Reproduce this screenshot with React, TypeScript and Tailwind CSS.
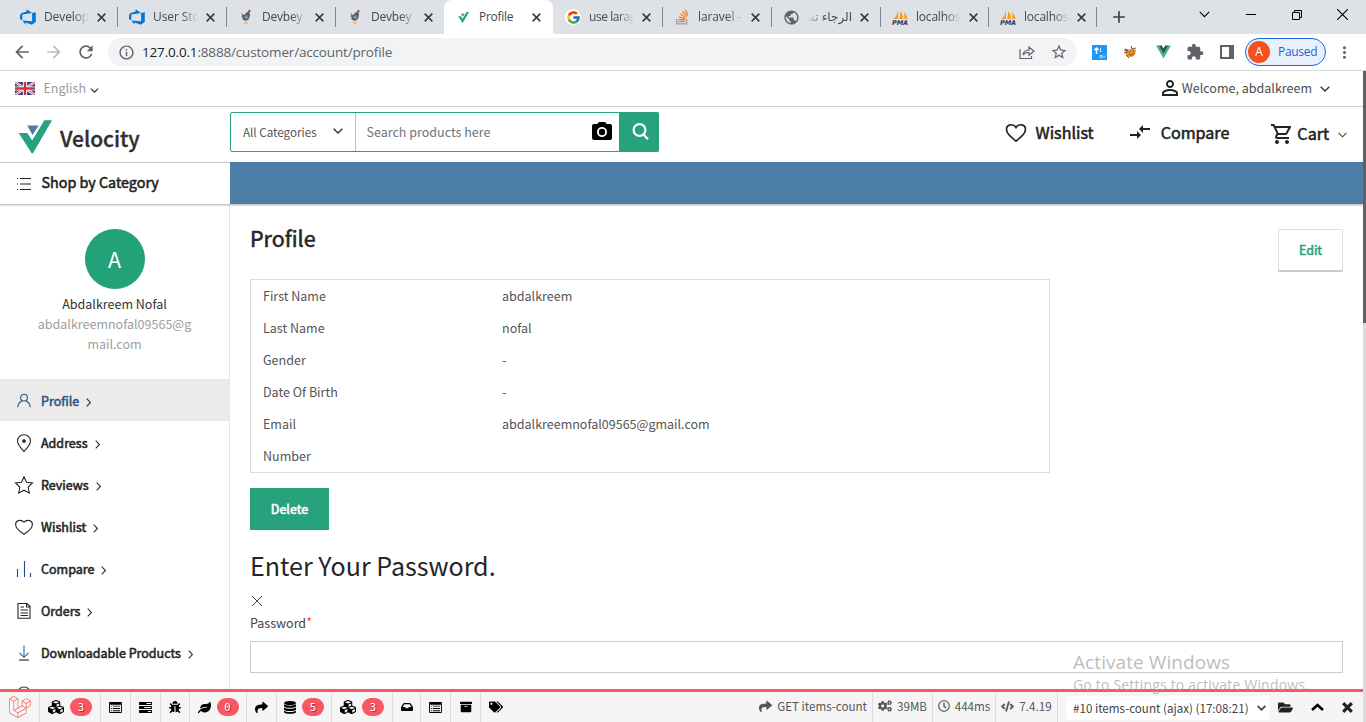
import React from "react";
import {
  FaArchive, FaBug, FaCode, FaCogs, FaCubes, FaFolderOpen,
  FaInbox, FaLaravel, FaLeaf, FaRegClock, FaShare, FaTags,
} from "react-icons/fa";
import { FcGoogle } from "react-icons/fc";
import {
  MdArrowBack, MdArrowForward, MdCompareArrows, MdExtension, MdInfoOutline, MdMoreVert,
  MdOutlineShoppingCart, MdPersonOutline, MdPhotoCamera, MdPublic, MdRefresh, MdStarBorder, MdAdd,
} from "react-icons/md";

const site = "font-['Noto_Sans_CJK_SC',sans-serif]";
const chrome = "font-['Open_Sans','DejaVu_Sans',sans-serif]";
const heavy = "[-webkit-text-stroke:0.55px_currentColor]";

function Chevron({ className, w = 1.2 }: { className: string; w?: number }) {
  return (
    <svg viewBox="0 0 10 6" className={className} fill="none" stroke="currentColor" strokeWidth={w}>
      <path d="M.7.7 5 5 9.3.7" />
    </svg>
  );
}

function Azure() {
  return (
    <svg viewBox="0 0 16 16" className="size-4">
      <path fill="#0078d7" d="M15.800 3.300v9.400L11.900 15.800 5.600 13.600v2.100L2.400 11.400l9.700.9V4zM12.100 4 6.600.3v2.300L1.500 4.100 0 6v4.200l2.300 1V5.400z" />
    </svg>
  );
}
function Chicken() {
  return (
    <svg viewBox="0 0 16 16" className="size-4">
      <path fill="#56616c" d="m3 4 3 2 3-3h2.500L12 6l-1 4-3 2-2.500-1L4 9.500l1-1L3 7l1.500-.5z" />
      <path fill="#8c969e" d="m6 8 3-2 1 3-2 1z" />
      <path fill="#e03131" d="M10 1h2.500v2h-2z" />
      <path fill="#edbd65" d="M6 13h4l-1 2.500H7z" />
    </svg>
  );
}
function StackIcon() {
  return (
    <svg viewBox="0 0 16 16" className="size-4" fill="none" strokeWidth="1.300">
      <path stroke="#9aa0a6" d="M2.700 10v4.800h10V10" />
      <path stroke="#f48024" d="M4.300 12.600h6.500M4.400 10.300l6.500.7M5 7.800l6.300 2M6.400 5l5.600 3.500M8.500 2.500l4.600 4.700M11.300.700l2.700 5.500" />
    </svg>
  );
}
function Pma() {
  return (
    <svg viewBox="0 0 17 16" className="h-4 w-[17px]">
      <path fill="#f89c1c" d="M6 1v9H1.500C4 8 5.500 5 6 1zm2 1c2 2 3 5 3 8H7.200C8 7 8.300 4 8 2zm4 1c2 2 3 4 3.500 7h-3.300c.3-2 .3-5-.2-7z" />
      <text x="0" y="15.500" fontSize="6.500" fontWeight="900" fontStyle="italic" fill="#333366" fontFamily="DejaVu Sans" textLength="16">PMA</text>
    </svg>
  );
}
function VLogo({ className }: { className: string }) {
  return (
    <svg viewBox="0 0 34 34" className={className}>
      <path fill="#26a37c" d="M.7 13h8.500l5 7.500L26.300.300H34L15 33.300H13.700z" />
      <path fill="#4d7ea8" d="M9.200 5.500h11.500L14.600 15z" />
    </svg>
  );
}

type Tab = { title: string; icon: React.ReactNode; active?: boolean; rtl?: boolean; w: string; sep?: boolean; tr: string };
const tabs: Tab[] = [
  { title: "Develop", icon: <Azure />, w: "w-[109px]", sep: true, tr: "tracking-[-0.1px]" },
  { title: "User Sto", icon: <Azure />, w: "w-[109px]", sep: true, tr: "tracking-[-0.1px]" },
  { title: "Devbey -", icon: <Chicken />, w: "w-[109px]", sep: true, tr: "tracking-[-0.2px]" },
  { title: "Devbey -", icon: <Chicken />, w: "w-[109px]", tr: "tracking-[-0.2px]" },
  { title: "Profile", icon: <VLogo className="ml-[3px] size-[11px]" />, active: true, w: "w-[109px]", tr: "tracking-[-0.3px]" },
  { title: "use larag", icon: <span className="flex size-4 items-center justify-center rounded-full bg-white"><FcGoogle size={15} /></span>, w: "w-[109px]", sep: true, tr: "tracking-[-0.42px]" },
  { title: "laravel -", icon: <StackIcon />, w: "w-[109px]", sep: true, tr: "tracking-[-0.1px]" },
  { title: "الرجاء تسـ", icon: <MdPublic size={17} color="#5f6368" />, rtl: true, w: "w-[109px]", sep: true, tr: "tracking-normal" },
  { title: "localhos", icon: <Pma />, w: "w-[108px]", sep: true, tr: "tracking-[-0.2px]" },
  { title: "localhos", icon: <Pma />, w: "w-[108px]", sep: true, tr: "tracking-[-0.2px]" },
];

function Browser() {
  return (
    <div className={`${chrome} shrink-0`}>
      <div className="flex h-[34px] items-stretch bg-[#dee1e6] pl-[9px] text-[#45494d]">
        {tabs.map((t, i) => (
          <div key={i} className={`${t.w} relative flex items-center pl-[11px] ${t.active ? "-ml-px mr-px rounded-t-lg bg-white" : ""}`}>
            <span className="flex w-[24px] shrink-0 items-center">{t.icon}</span>
            <span dir={t.rtl ? "rtl" : "ltr"} className={`${t.tr} w-[45px] whitespace-nowrap text-[12px] leading-5 ${t.active ? "" : t.rtl ? "[mask-image:linear-gradient(to_left,black_60%,transparent)]" : "[mask-image:linear-gradient(to_right,black_65%,transparent)]"}`}>{t.title}</span>
            <svg viewBox="0 0 9 9" className="ml-[8px] size-[9px] shrink-0" stroke="#3c4043" strokeWidth="1.700"><path d="m.7.7 7.600 7.600M8.300.7.7 8.300" /></svg>
            {t.sep && <span className="absolute right-0 top-[7px] h-5 w-px bg-[#84888d]" />}
          </div>
        ))}
        <div className="flex w-[44px] items-center justify-center"><MdAdd size={20} color="#3c4043" /></div>
        <div className="ml-auto flex items-center gap-[35px] pr-[18px] pb-[5px] text-black">
          <Chevron className="h-[7px] w-[11px] -translate-x-[2px]" w={1} />
          <span className="h-px w-[10px] -translate-x-px bg-black" />
          <svg viewBox="0 0 10 10" className="size-[10px]" fill="none" stroke="currentColor"><path d="M.5 2.500h7v7h-7zM2.500 2.500v-2h7v7h-2" /></svg>
          <svg viewBox="0 0 10 10" className="size-[11px]" stroke="currentColor"><path d="m0 0 10 10M10 0 0 10" /></svg>
        </div>
      </div>
      <div className="flex h-[37px] items-center border-b border-[#d5d7da] bg-white pl-[12px] text-[#5f6368]">
        <MdArrowBack size={20} className="mr-[12px]" />
        <MdArrowForward size={20} className="mr-[12px] text-[#babcbe]" />
        <MdRefresh size={20} className="mr-[12px]" />
        <div className="flex h-7 w-[969px] items-center rounded-full bg-[#f1f3f4] pl-[10px]">
          <MdInfoOutline size={17} />
          <span className="ml-[7px] text-[13.500px] leading-5 tracking-[-0.170px] text-[#5f6368]"><span className="text-[#202124]">127.0.0.1</span>:8888/customer/account/profile</span>
          <svg viewBox="0 0 16 16" className="ml-auto size-4" fill="none" stroke="currentColor" strokeWidth="1.200"><path d="M1 5v9.500h11.500V12M4 11c.5-3.500 2.500-5 6-5V3l5 4.300-5 4V8.500c-3-.3-4.500.5-6 2.500z" /></svg>
          <MdStarBorder size={18} className="ml-[15px] mr-[9px]" />
        </div>
        <svg viewBox="0 0 15 15" className="ml-[15px] size-[15px]"><path fill="#2196f3" d="M0 0h15v15H0z" /><path fill="none" stroke="#fff" strokeWidth="1.500" d="M4.500 9V3M2.500 5l2-2 2 2" /><path fill="none" stroke="#bbdefb" d="M8.500 3v4M7.500 6l1 1 1-1M8 10.500h2v2H8zM11 10.500l2 2m0-2-2 2" /></svg>
        <svg viewBox="0 0 15 15" className="ml-4 size-[15px]"><path fill="#e79135" d="M2 7c3-3 7-4 11-2-.5 4-2 7-6 7-3 0-4-2-5-5z" /><path fill="none" stroke="#634328" strokeWidth=".9" d="m1 5 4 1M8 1l1 3 4-1M1 8l3-1m2 2c2 2 4 1 6-1m-9 2 3 3M6 7h1m3-1h1M2 4l3 1" /></svg>
        <svg viewBox="0 0 15 14" className="ml-[18px] h-[14px] w-[15px]"><path fill="#41b883" d="M0 .5h3.500l4 7 4-7H15L7.500 13.500z" /><path fill="#34495e" d="M3 .5h2.700l1.800 3 1.800-3H12l-4.500 8z" /></svg>
        <MdExtension size={18} className="ml-[15px]" />
        <svg viewBox="0 0 14 14" className="ml-4 size-[14px]"><path fill="none" stroke="currentColor" strokeWidth="2" d="M1 1h12v12H1z" /><path fill="currentColor" d="M9 1h4v12H9z" /></svg>
        <div className="ml-[11px] flex h-7 w-[81px] items-center rounded-full border border-[#1967d2] bg-[#e8f0fe] pl-[2px] text-[#1b66ca]">
          <span className="flex size-[22px] items-center justify-center rounded-full bg-[#f4511e] text-[12px] text-white">A</span>
          <span className="ml-[8px] text-[12px] tracking-[-0.3px]">Paused</span>
        </div>
        <MdMoreVert size={19} className="ml-[9px]" />
      </div>
    </div>
  );
}

function Flag() {
  return (
    <svg viewBox="0 0 20 13" className="h-[13px] w-5">
      <path fill="#31417e" d="M0 0h20v13H0z" />
      <path stroke="#fff" strokeWidth="2.400" d="m0 0 20 13M20 0 0 13" />
      <path stroke="#d9384c" strokeWidth=".9" d="m0 0 20 13M20 0 0 13" />
      <path stroke="#fff" strokeWidth="4.200" d="M10 0v13M0 6.500h20" />
      <path stroke="#d32f43" strokeWidth="2.400" d="M10 0v13M0 6.500h20" />
    </svg>
  );
}

function Header() {
  return (
    <>
      <div className="flex h-9 shrink-0 items-center border-b border-[#ccc] pl-[15px] pr-[33px] text-[12.530px] leading-5">
        <Flag />
        <span className="-mt-[2px] ml-[8.500px] text-[#9b9b9b]">English</span>
        <Chevron className="ml-[4px] mt-[3px] h-[5px] w-[9px] text-[#333]" w={1.500} />
        <MdPersonOutline size={24} className="-mt-px ml-auto text-[#222]" />
        <span className="-mt-[2px] text-[#4c4c4c]">Welcome, abdalkreem</span>
        <Chevron className="ml-[8px] h-[6px] w-[10px] text-[#333]" w={1.300} />
      </div>
      <div className="flex h-[55px] shrink-0 items-start">
        <div className="flex w-[230px] pl-[18px] pt-[13px]">
          <VLogo className="h-[34px] w-[34px]" />
          <span className="ml-[8px] mt-[4px] text-[21px] font-medium leading-7 tracking-[-0.020px] text-[#2f2f2f] [-webkit-text-stroke:0.350px_currentColor]">Velocity</span>
        </div>
        <div className="mt-[5px] flex h-10 w-[429px] rounded-[2px] border border-[#26a37c]">
          <div className="flex w-[125px] items-center border-r border-[#bbb] pl-[12px] text-[11.640px] leading-5 text-[#555]">
            <span className="-mt-px">All Categories</span>
            <Chevron className="-mt-[2px] ml-[16px] h-[6px] w-[10px] text-[#333]" w={1.400} />
          </div>
          <span className="ml-[10.500px] self-center text-[12.530px] leading-5 text-[#6c757d]">Search products here</span>
          <MdPhotoCamera size={24} className="ml-auto self-center text-black" />
          <span className="-my-px -mr-px ml-[5px] flex w-10 items-center justify-center rounded-r-[2px] bg-[#28a27c]">
            <svg viewBox="0 0 17 17" className="mb-[2px] mr-[-2px] size-[17px]" fill="none" stroke="#fff" strokeWidth="2.200"><circle cx="7.500" cy="7" r="5.900" /><path d="m11.500 11.500 4.500 4.700" /></svg>
          </span>
        </div>
        <div className="ml-auto flex h-[53px] items-center pr-[16px] text-[16.100px] leading-6 text-[#222]">
          <svg viewBox="0 0 22 20" className="-mt-[2px] h-[20px] w-[22px]" fill="none" stroke="currentColor" strokeWidth="1.700"><path d="M11 18.200C5 13 1.500 10.200 1.500 6.300 1.500 1.500 8 0 11 4.400 14 0 20.500 1.500 20.500 6.300c0 3.900-3.500 6.700-9.500 11.900z" /></svg>
          <span className={`${heavy} -mt-[4px] ml-[9px]`}>Wishlist</span>
          <MdCompareArrows size={24} className="-mt-[3px] ml-[34px]" />
          <span className={`${heavy} -mt-[4px] ml-[9px]`}>Compare</span>
          <MdOutlineShoppingCart size={24} className="ml-[41px]" />
          <span className={`${heavy} -mt-px ml-[3px]`}>Cart</span>
          <Chevron className="ml-[9px] mt-[2px] h-[6px] w-[9px] text-[#444]" />
        </div>
      </div>
      <div className="relative z-10 flex h-[42px] shrink-0 bg-white shadow-[0_1px_2px_rgba(0,0,0,0.35)]">
        <div className="flex w-[230px] items-center border-t border-[#ccc] pl-[17px] text-[14.320px] leading-6 text-[#222]">
          <svg viewBox="0 0 14 12" className="h-3 w-[14px]" stroke="currentColor" strokeWidth="1"><path d="M3 .5h11M3 6h11M3 11.500h11M0 .5h1M0 6h1M0 11.500h1" /></svg>
          <span className={`${heavy} -mt-[4px] ml-[10.500px]`}>Shop by Category</span>
        </div>
        <div className="flex-1 bg-[#4d7ea8]" />
      </div>
    </>
  );
}

const navIcons: Record<string, React.ReactNode> = {
  Profile: <path d="M8 8c-2.300 0-3.400-1.600-3.400-3.400S6 1.300 8 1.300s3.400 1.500 3.400 3.300S10.300 8 8 8zm-2 0c-2.500 1-4 3-4.300 6.300M10 8c2.500 1 4 3 4.300 6.300" />,
  Address: <><path d="M8 16.500C4.500 12.500 1.500 9.500 1.500 6.200A6.300 6.300 0 0 1 8-.300a6.300 6.300 0 0 1 6.500 6.500C14.500 9.500 11.500 12.500 8 16.500z" /><circle cx="8" cy="6" r="1.300" fill="currentColor" /></>,
  Reviews: <path d="m8-.2 2.500 5.400 6 .8-4.300 4 1.100 6L8 13.200 2.700 16l1.100-6L-.500 6l6-.8z" />,
  Wishlist: <path d="M8 15.200C2 11.500-.400 9-.400 5.500-.400 1.300 5 0 8 3.200 11 0 16.400 1.300 16.400 5.500c0 3.500-2.400 6-8.400 9.700z" />,
  Compare: <path stroke="#1f4f85" d="M1.500 8v8M8.500 0v16M14.500 12v4" />,
  Orders: <path d="M2 .5h9l3 3v11.800H2zM10.500.5V4H14M4.500 4H8M4.500 7H12M4.500 10H12M4.500 12.500H12" />,
  "Downloadable Products": <><path stroke="#2c6ca0" d="M8 .5V12M3.500 8 8 12.300 12.500 8" /><path d="M3 15h10" /></>,
};

function Sidebar() {
  return (
    <div className="flex w-[230px] shrink-0 flex-col border-r border-[#e5e5e5]">
      <div className="flex h-[175px] shrink-0 flex-col items-center pt-[25px] text-[12.530px] leading-5">
        <span className="flex size-[60px] items-center justify-center rounded-full bg-[#23a179] text-[21.500px] text-white">A</span>
        <span className="mt-[5px] text-[#333]">Abdalkreem Nofal</span>
        <span className="w-[156px] text-center text-[#9e9e9e] [word-break:break-all]">abdalkreemnofal09565@gmail.com</span>
      </div>
      {Object.keys(navIcons).map((n) => (
        <div key={n} className={`flex h-[42px] shrink-0 items-center pl-4 pt-[2px] text-[12.530px] leading-5 ${n === "Profile" ? "bg-[#ebebeb] text-[#2b5681]" : "text-[#262626]"}`}>
          <svg viewBox="0 0 16 16" className="size-4 overflow-visible" fill="none" stroke="currentColor" strokeWidth="1.100">{navIcons[n]}</svg>
          <span className={`${heavy} ml-[9px]`}>{n}</span>
          <svg viewBox="0 0 5 9" className="ml-[7px] mt-[3px] h-[9px] w-[5px]" fill="none" stroke="#333" strokeWidth="1.100"><path d="m.7.6 3.700 3.900L.7 8.400" /></svg>
        </div>
      ))}
      <div className="flex h-[42px] shrink-0 pl-4 pt-[13px]">
        <svg viewBox="0 0 16 16" className="size-4" fill="none" stroke="#262626" strokeWidth="1.100"><circle cx="8" cy="8" r="7" /></svg>
      </div>
    </div>
  );
}

const fields = [
  ["First Name", "abdalkreem"], ["Last Name", "nofal"], ["Gender", "-"],
  ["Date Of Birth", "-"], ["Email", "abdalkreemnofal09565@gmail.com"], ["Number", ""],
];

function Main() {
  return (
    <div className="flex-1 pl-5 pr-5 pt-[20px] text-[12.530px] leading-5 text-[#555]">
      <div className="flex h-[55px] items-start justify-between">
        <h1 className={`${heavy} text-[21.490px] leading-7 text-[#262626]`}>Profile</h1>
        <button className={`${heavy} mt-[5px] h-[43px] w-[65px] border border-b-2 border-[#dedede] border-b-[#ccc] text-[12.530px] text-[#26a37c]`}>Edit</button>
      </div>
      <div className="h-[194px] w-[800px] border border-[#dcdcdc]">
        {fields.map(([k, v]) => (
          <div key={k} className="flex h-8 items-center pl-3">
            <span className="w-[239px]">{k}</span>
            <span>{v}</span>
          </div>
        ))}
      </div>
      <button className={`${heavy} mt-[15px] block h-[42px] w-[79px] bg-[#28a27c] text-[12.530px] text-white`}>Delete</button>
      <h2 className="mt-[17px] text-[25.070px] leading-9 text-[#262626]">Enter Your Password.</h2>
      <svg viewBox="0 0 10 10" className="ml-[2px] mt-[13px] size-[10px]" stroke="#333" strokeWidth=".9"><path d="m0 0 10 10M10 0 0 10" /></svg>
      <div className="mt-[7px] flex h-5 text-[#444]">Password<span className="-mt-px text-[#ff3b3b]">*</span></div>
      <div className="mt-[8px] h-8 border border-[#ccc]" />
    </div>
  );
}

function ListIcon() {
  return (
    <svg viewBox="0 0 14 12" className="h-[11px] w-[13px]" fill="currentColor">
      <path fillRule="evenodd" d="M1 0h12q1 0 1 1v10q0 1-1 1H1q-1 0-1-1V1q0-1 1-1zm0 3v8h12V3z" />
      <path d="M2 4h1v1H2zm2 0h8v1H4zM2 6.500h1v1H2zm2 0h8v1H4zM2 9h1v1H2zm2 0h8v1H4z" />
    </svg>
  );
}
function TasksIcon() {
  return (
    <svg viewBox="0 0 14 12" className="h-[11px] w-[13px]" fill="currentColor">
      <path fillRule="evenodd" d="M0 0h14v3.200H0zm8 1v1.200h5V1zM0 4.400h14v3.200H0zm5.500 1v1.200H13V5.400zM0 8.800h14V12H0zm9.500 1V11H13V9.800z" />
    </svg>
  );
}
function DatabaseIcon() {
  return (
    <svg viewBox="0 0 12 13" className="h-[13px] w-3" fill="currentColor">
      <ellipse cx="6" cy="2" rx="6" ry="2" />
      <path d="M0 3.300c2 1.800 10 1.800 12 0v1.900c-1 2-11 2-12 0zM0 6.500c2 1.800 10 1.800 12 0v1.900c-1 2-11 2-12 0zM0 9.700c2 1.800 10 1.800 12 0v1.500c-1 2.200-11 2.200-12 0z" />
    </svg>
  );
}

function Cell({ w, children, count }: { w: string; children: React.ReactNode; count?: string }) {
  return (
    <div className={`${w} flex items-center justify-center gap-[6px] border-r border-[#ddd]`}>
      {children}
      {count && <span className="flex h-[18px] w-[22px] items-center justify-center rounded-full bg-[#fa5661] font-['DejaVu_Sans_Mono',monospace] text-[10.500px] leading-4 text-white [text-shadow:1px_1px_1px_#b02430]">{count}</span>}
    </div>
  );
}

function DebugBar() {
  return (
    <div className="relative z-20 flex h-[33px] shrink-0 border-t-[3px] border-[#fa5661] bg-[#f5f5f5] text-[11.640px] leading-5 text-black">
      <Cell w="w-10"><FaLaravel size={22} color="#f4645f" /></Cell>
      <Cell w="w-[61px]" count="3"><FaCubes size={16} /></Cell>
      <Cell w="w-[30px]"><ListIcon /></Cell>
      <Cell w="w-[30px]"><TasksIcon /></Cell>
      <Cell w="w-[29px]"><FaBug size={12} /></Cell>
      <Cell w="w-[57px]" count="0"><FaLeaf size={13} /></Cell>
      <Cell w="w-[30px]"><FaShare size={13} /></Cell>
      <Cell w="w-[55px]" count="5"><DatabaseIcon /></Cell>
      <Cell w="w-[61px]" count="3"><FaCubes size={16} /></Cell>
      <Cell w="w-[28px]"><FaInbox size={12} /></Cell>
      <Cell w="w-[30px]"><ListIcon /></Cell>
      <Cell w="w-[30px]"><FaArchive size={12} /></Cell>
      <div className="flex w-[30px] items-center justify-center"><FaTags size={14} /></div>
      <div className="ml-auto flex text-[#555]">
        <div className="flex items-center gap-[5px] border-r border-[#ddd] pb-[2px] pr-[5px]"><FaShare size={13} />GET items-count</div>
        <div className="flex w-[60px] items-center justify-center gap-[5px] border-r border-[#ddd] pb-[2px]"><FaCogs size={14} />39MB</div>
        <div className="flex w-[63px] items-center justify-center gap-[5px] border-r border-[#ddd] pb-[2px]"><FaRegClock size={12} />444ms</div>
        <div className="flex w-[62px] items-center justify-center gap-[5px] border-r border-[#ddd] pb-[2px]"><FaCode size={13} />7.4.19</div>
        <div className="ml-2 mt-1 flex h-6 w-[204px] items-center rounded-[3px] bg-white pl-[7px] text-[#444]">
          <span className="-mt-px">#10 items-count (ajax) (17:08:21)</span>
          <Chevron className="ml-[8px] h-[6px] w-[9px]" w={2} />
        </div>
        <div className="flex w-[93px] items-center justify-between pl-[8px] pr-[9px] text-[#222]">
          <FaFolderOpen size={15} />
          <svg viewBox="0 0 13 8" className="h-2 w-[13px]" fill="none" stroke="#000" strokeWidth="2.600"><path d="m1 7 5.500-5L12 7" /></svg>
          <svg viewBox="0 0 11 11" className="mr-px size-[11px]" stroke="currentColor" strokeWidth="3.200"><path d="m1.200 1.200 8.600 8.600M9.800 1.200 1.200 9.800" /></svg>
        </div>
      </div>
    </div>
  );
}

export default function App() {
  return (
    <div className="relative flex h-[722px] w-[1366px] flex-col overflow-hidden bg-white">
      <Browser />
      <div className="flex min-h-0 flex-1">
        <div className={`${site} flex w-[1363px] flex-col overflow-hidden`}>
          <Header />
          <div className="flex min-h-0 flex-1 overflow-hidden">
            <Sidebar />
            <Main />
          </div>
          <DebugBar />
        </div>
        <div className="flex-1 bg-[#dcdcdc]"><div className="h-[252px] bg-[#606060]" /></div>
      </div>
      <div className={`${chrome} pointer-events-none absolute left-[1073px] top-[648px] z-30 whitespace-nowrap text-[#a6a6a6]/75`}>
        <div className="text-[19px] leading-7 tracking-[0.080px]">Activate Windows</div>
        <div className="text-[14px] leading-[18px] tracking-[0.190px]">Go to Settings to activate Windows.</div>
      </div>
    </div>
  );
}
